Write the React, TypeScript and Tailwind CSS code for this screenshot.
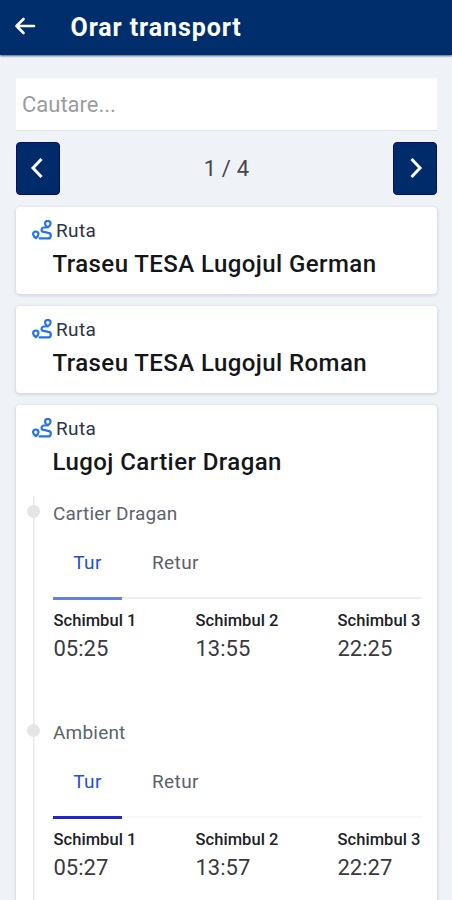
import React from "react";

const stops = [
  { name: "Cartier Dragan", times: ["05:25", "13:55", "22:25"], bar: "bg-[#6380dc]", rule: "bg-[#eeeeef]", spacing: "tracking-[0.17px]" },
  { name: "Ambient", times: ["05:27", "13:57", "22:27"], bar: "bg-[#2226d0]", rule: "bg-[#f8f8f9]", spacing: "tracking-[0.2px]" },
];

function RouteIcon() {
  return (
    <svg width="20" height="20" viewBox="0 0 20 20" fill="none" stroke="#2472ec" strokeWidth="2.2" strokeLinecap="round" strokeLinejoin="round" className="shrink-0">
      <path d="M3.8 18.2C2 16.6 1.1 15.5 1.1 14.2a2.7 2.7 0 0 1 5.4 0c0 1.3-.9 2.4-2.7 4Z" />
      <path d="M15.8 7.4c-1.9-1.6-2.8-2.5-2.8-3.7a2.8 2.8 0 0 1 5.6 0c0 1.2-.9 2.1-2.8 3.7Z" />
      <path d="M14 7.5h-2a2.2 2.2 0 0 0-.4 4.4l4.6.9a2.8 2.8 0 0 1-.4 5.6H7.6" />
    </svg>
  );
}

function RouteHead({ title }: { title: string }) {
  return (
    <>
      <div className="flex h-5 items-center gap-[4px] pl-4">
        <RouteIcon />
        <span className="pt-[2px] text-[19px] leading-5 tracking-[0.35px] text-[#2b344a]">Ruta</span>
      </div>
      <h2 className="mt-[10px] pl-[36.5px] text-[24px] leading-7 font-medium tracking-[0.43px] whitespace-nowrap text-[#15161a]">{title}</h2>
    </>
  );
}

const card = "rounded-[4px] bg-white shadow-[0_1px_3px_1px_rgba(40,50,70,0.13)]";

function Stop({ stop }: { stop: (typeof stops)[number] }) {
  return (
    <section className="h-[219px]">
      <div className="flex h-6 items-center">
        <div className="flex w-[34px] justify-center">
          <span className="-mt-1 h-[13px] w-[13px] rounded-full bg-[#e5e5e6]" />
        </div>
        <h3 className={"ml-[3px] pt-[2px] text-[19px] leading-6 text-[#5d636d] " + stop.spacing}>{stop.name}</h3>
      </div>
      <div className="mt-[26px] mr-[15px] ml-[37px]">
        <div className="flex text-[19px] leading-6">
          <button className="w-[69px] text-center tracking-[0.3px] text-[#1d50db]">Tur</button>
          <button className="ml-[30px] tracking-[0.4px] text-[#5c616d]">Retur</button>
        </div>
        <div className={"mt-[22px] h-[2px] " + stop.rule}>
          <div className={"h-[2.5px] w-[69px] " + stop.bar} />
        </div>
        <div className="mt-3 grid grid-cols-[142px_142px_1fr] pl-[0.5px]">
          {stop.times.map((time, i) => (
            <div key={time} className="whitespace-nowrap">
              <div className="text-[16.5px] leading-5 font-medium tracking-[0.05px] text-[#202124]">Schimbul {i + 1}</div>
              <div className="mt-1 text-[22px] leading-7 text-[#393a3e]">{time}</div>
            </div>
          ))}
        </div>
      </div>
    </section>
  );
}

function PageButton({ next }: { next?: boolean }) {
  return (
    <button
      aria-label={next ? "Următor" : "Anterior"}
      className={"flex h-[53px] w-[44px] items-center justify-center rounded-[4px] border border-[#100c60] bg-[#002b6b] pb-[1px] " + (next ? "pl-[2px]" : "pr-[2px]")}
    >
      <svg width="14" height="22" viewBox="0 0 14 22" fill="none" stroke="#fff" strokeWidth="3">
        <path d={next ? "M2.5 2l8.5 9-8.5 9" : "M11.5 2L3 11l8.5 9"} />
      </svg>
    </button>
  );
}

export default function App() {
  return (
    <div className="flex h-[900px] w-[452px] flex-col overflow-hidden bg-[#eff3f8] font-[Roboto,sans-serif]">
      <header className="flex h-[55px] shrink-0 items-center bg-[#002e6c] shadow-[0_1px_2px_rgba(10,20,60,0.7)]">
        <svg width="22" height="20" viewBox="0 0 22 20" fill="none" stroke="#fff" strokeWidth="2.6" strokeLinecap="round" strokeLinejoin="round" className="mt-[-3px] ml-[14px]">
          <path d="M20 10H2.5M9.5 3L2.5 10l7 7" />
        </svg>
        <h1 className="ml-[34.5px] text-[25px] leading-8 font-bold tracking-[0.9px] whitespace-nowrap text-white">Orar transport</h1>
      </header>
      <main className="flex flex-1 flex-col pt-[23px] pr-[15px] pl-4">
        <input placeholder="Cautare..." className="h-[53px] w-full shrink-0 border-b border-[#e2e4e8] bg-white px-[6px] text-[22px] outline-none placeholder:text-[#9b9c9f]" />
        <nav className="mt-[11px] flex h-[53px] shrink-0 items-center justify-between">
          <PageButton />
          <span className="text-[22px] tracking-[0.2px] text-[#44464b]">1 / 4</span>
          <PageButton next />
        </nav>
        <article className={"mt-3 h-[87px] shrink-0 pt-[13px] " + card}>
          <RouteHead title="Traseu TESA Lugojul German" />
        </article>
        <article className={"mt-3 h-[87px] shrink-0 pt-[13px] " + card}>
          <RouteHead title="Traseu TESA Lugojul Roman" />
        </article>
        <article className={"mt-3 h-[520px] shrink-0 pt-[13px] " + card}>
          <RouteHead title="Lugoj Cartier Dragan" />
          <div className="mt-[20px] bg-[linear-gradient(#e9e9ea,#e9e9ea)] bg-[length:1.5px_100%] bg-[position:16.5px_0] bg-no-repeat pt-[5px]">
            {stops.map((s) => (
              <Stop key={s.name} stop={s} />
            ))}
          </div>
        </article>
      </main>
    </div>
  );
}
